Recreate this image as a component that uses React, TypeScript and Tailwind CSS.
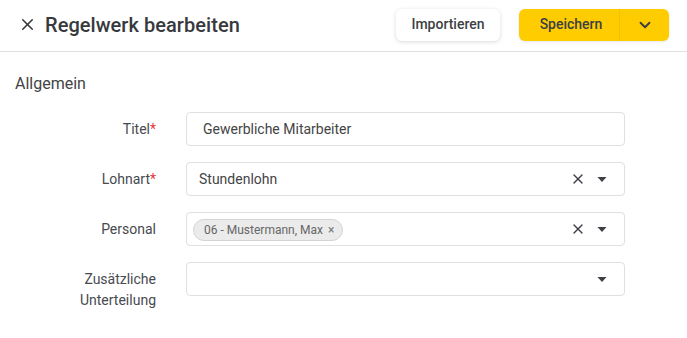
import { X, ChevronDown } from 'lucide-react'

function Caret() {
  return (
    <svg width="10" height="5" viewBox="0 0 10 5" className="text-[#3c3f44]">
      <path d="M0.5 0h9L5 5z" fill="currentColor" />
    </svg>
  )
}

function Label({ text, required, className }: { text: React.ReactNode; required?: boolean; className?: string }) {
  return (
    <div className={`w-[141px] shrink-0 text-right text-[14px] leading-[21px] text-[#474a4f] ${className ?? ''}`}>
      {text}
      {required && <span className="text-[#e53935]">*</span>}
    </div>
  )
}

function App() {
  return (
    <div className="w-[687px] h-[338px] bg-white font-['Roboto',sans-serif] text-[#333]">
      {/* Header */}
      <div className="h-[52px] flex items-center justify-between pl-[18px] pr-[18px] border-b border-[#e0e0e0]">
        <div className="flex items-center gap-[8px] -mt-[2px]">
          <X size={19} strokeWidth={2} className="text-[#37393d]" />
          <span className="text-[20px] font-medium text-[#37393d] tracking-[0.05px]">Regelwerk bearbeiten</span>
        </div>
        <div className="flex items-center gap-[19px] -mt-[2px]">
          <button className="h-[32px] w-[104px] rounded-[6px] bg-white shadow-[0_1px_4px_rgba(0,0,0,0.15)] text-[14px] font-medium text-[#3c3f44]">
            Importieren
          </button>
          <div className="h-[32px] w-[150px] rounded-[6px] bg-[#ffcc00] flex shadow-[0_1px_3px_rgba(0,0,0,0.1)]">
            <button className="w-[100px] text-[14px] font-medium text-[#3c3f44] pl-[4px]">Speichern</button>
            <div className="w-px bg-[#f2c200]" />
            <button className="flex-1 flex items-center justify-center text-[#3c3f44]">
              <ChevronDown size={18} strokeWidth={2.5} />
            </button>
          </div>
        </div>
      </div>

      {/* Body */}
      <div className="pl-[15px] pr-[62px] pt-[21px]">
        <div className="text-[16px] leading-[22px] text-[#444]">Allgemein</div>
        <div className="mt-[17px] flex flex-col gap-[16px]">
          <div className="flex items-center gap-[30px]">
            <Label text="Titel" required />
            <div className="flex-1 h-[34px] rounded-[4px] border border-[#e0e0e0] flex items-center pl-[16px] text-[14px] text-[#444]">
              Gewerbliche Mitarbeiter
            </div>
          </div>
          <div className="flex items-center gap-[30px]">
            <Label text="Lohnart" required />
            <div className="flex-1 h-[34px] rounded-[4px] border border-[#e0e0e0] flex items-center pl-[12px] pr-[17px] text-[14px] text-[#444]">
              <span className="flex-1">Stundenlohn</span>
              <X size={16} strokeWidth={2} className="text-[#3c3f44] mr-[11px]" />
              <Caret />
            </div>
          </div>
          <div className="flex items-center gap-[30px]">
            <Label text="Personal" />
            <div className="flex-1 h-[34px] rounded-[4px] border border-[#e0e0e0] flex items-center pl-[6px] pr-[17px]">
              <div className="flex-1">
                <span className="inline-flex items-center h-[22px] rounded-full border border-[#d4d4d4] bg-[#ebebeb] pl-[10px] pr-[8px] text-[12px] text-[#666]">
                  06 - Mustermann, Max
                  <span className="ml-[5px] text-[12px] text-[#777]">×</span>
                </span>
              </div>
              <X size={16} strokeWidth={2} className="text-[#3c3f44] mr-[11px]" />
              <Caret />
            </div>
          </div>
          <div className="flex items-start gap-[30px]">
            <Label text={<>Zusätzliche<br />Unterteilung</>} className="pt-[7px]" />
            <div className="flex-1 h-[34px] rounded-[4px] border border-[#e0e0e0] flex items-center justify-end pr-[17px]">
              <Caret />
            </div>
          </div>
        </div>
      </div>
    </div>
  )
}

export default App
